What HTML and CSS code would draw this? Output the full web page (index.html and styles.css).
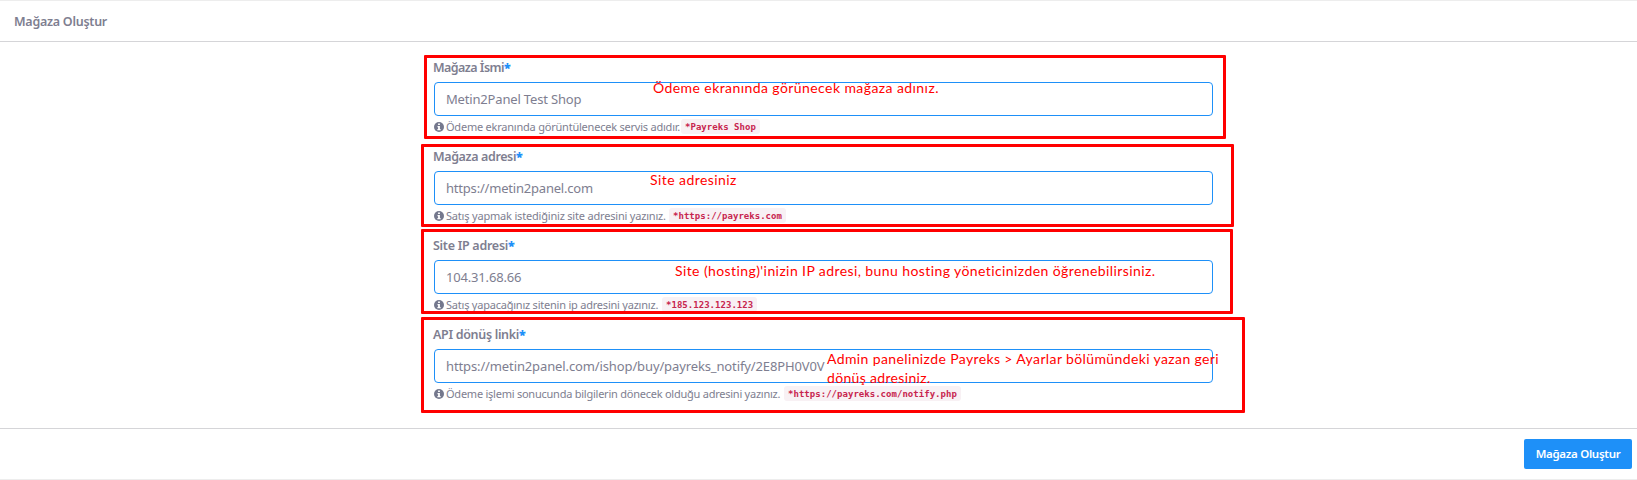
FILE: index.html
```html
<!DOCTYPE html>
<html lang="tr">
<head>
<meta charset="utf-8">
<title>Mağaza Oluştur</title>
<link rel="stylesheet" href="styles.css">
</head>
<body>
<svg width="0" height="0" class="sprite">
  <symbol id="info" viewBox="0 0 10 10">
    <circle cx="5" cy="5" r="5" fill="#74788d"/>
    <path d="M4.1 1.6h1.8v1.5H4.1zM3.5 4.1h2.4v3h.7v1.1H3.4V7.100h.7V5.200h-.6z" fill="#fff"/>
  </symbol>
</svg>
<main class="card">
  <header class="card-header">Mağaza Oluştur</header>
  <form class="card-body">
    <section class="field name">
      <label class="label"><span>Mağaza İsmi</span><b>*</b></label>
      <div class="input">Metin2Panel Test Shop</div>
      <div class="hint"><svg class="icon"><use href="#info"/></svg><span class="help">Ödeme ekranında görüntülenecek servis adıdır.</span><code>*Payreks Shop</code></div>
      <div class="frame"></div>
      <div class="note">Ödeme ekranında görünecek mağaza adınız.</div>
    </section>
    <section class="field address">
      <label class="label"><span>Mağaza adresi</span><b>*</b></label>
      <div class="input">https://metin2panel.com</div>
      <div class="hint"><svg class="icon"><use href="#info"/></svg><span class="help">Satış yapmak istediğiniz site adresini yazınız.</span><code>*https://payreks.com</code></div>
      <div class="frame"></div>
      <div class="note">Site adresiniz</div>
    </section>
    <section class="field ip">
      <label class="label"><span>Site IP adresi</span><b>*</b></label>
      <div class="input">104.31.68.66</div>
      <div class="hint"><svg class="icon"><use href="#info"/></svg><span class="help">Satış yapacağınız sitenin ip adresini yazınız.</span><code>*185.123.123.123</code></div>
      <div class="frame"></div>
      <div class="note">Site (hosting)'inizin IP adresi, bunu hosting yöneticinizden öğrenebilirsiniz.</div>
    </section>
    <section class="field api">
      <label class="label"><span>API dönüş linki</span><b>*</b></label>
      <div class="input">https://metin2panel.com/ishop/buy/payreks_notify/2E8PH0V0V</div>
      <div class="hint"><svg class="icon"><use href="#info"/></svg><span class="help">Ödeme işlemi sonucunda bilgilerin dönecek olduğu adresini yazınız.</span><code>*https://payreks.com/notify.php</code></div>
      <div class="frame"></div>
      <div class="note">Admin panelinizde Payreks &gt; Ayarlar bölümündeki yazan geri<br><span class="last">dönüş adresiniz.</span></div>
    </section>
  </form>
  <footer class="card-footer"><button class="submit" type="button">Mağaza Oluştur</button></footer>
</main>
</body>
</html>
```
FILE: styles.css
```css
* { box-sizing: border-box; }
body {
  margin: 0;
  background: #fff;
  color: #7e7e90;
  font-family: "Noto Sans", sans-serif;
}
.sprite { display: block; position: absolute; }
.card {
  display: flex;
  flex-direction: column;
  height: 480px;
  border-top: 1px solid #ededed;
  border-bottom: 1px solid #ededed;
}
.card-header {
  height: 41px;
  padding-left: 14px;
  border-bottom: 1px solid #d5d5d8;
  font-size: 12.5px;
  font-weight: 600;
  line-height: 41px;
  letter-spacing: -.26px;
}
.card-body {
  flex: 1;
  width: 779px;
  margin-left: 434px;
  padding-top: 17px;
}
.field { position: relative; height: 89px; }
.label {
  display: flex;
  height: 23px;
  margin-left: -1px;
  font-size: 12.5px;
  font-weight: 600;
  line-height: 17px;
  white-space: nowrap;
}
.label b { color: #1e90f8; }
.input {
  height: 34px;
  padding-left: 11px;
  border: 1px solid #1e90f8;
  border-radius: 4px;
  font-size: 13px;
  line-height: 33px;
  white-space: nowrap;
}
.hint {
  display: flex;
  align-items: center;
  height: 15px;
  margin-top: 3px;
  font-size: 11px;
  line-height: 15px;
  white-space: nowrap;
}
.icon { flex: none; width: 10px; height: 10px; margin-right: 2px; }
code {
  height: 15px;
  margin-left: 1px;
  padding: 0 4px;
  border-radius: 3px;
  background: #f8f1f4;
  color: #c7254e;
  font: bold 9px/16px "DejaVu Sans Mono", monospace;
  letter-spacing: .03px;
}
.frame { position: absolute; border: 3px solid #f00; border-radius: 1px; }
.note {
  position: absolute;
  color: #f00;
  font: 14px/19px Lato, sans-serif;
  white-space: nowrap;
}

.name .label { letter-spacing: -.55px; }
.name .input { letter-spacing: -.17px; }
.name .help { width: 234px; letter-spacing: -.22px; }
.name .frame { left: -10px; top: -4px; width: 802px; height: 84px; }
.name .note { left: 219px; top: 19px; letter-spacing: .42px; }

.address .label { letter-spacing: -.38px; }
.address .input { letter-spacing: -.2px; }
.address .help { width: 222px; letter-spacing: -.19px; }
.address .frame { left: -13px; top: -4px; width: 813px; height: 83px; }
.address .note { left: 216px; top: 22px; letter-spacing: .43px; }

.ip .label { letter-spacing: -.28px; }
.ip .input { letter-spacing: -.18px; }
.ip .help { width: 215px; letter-spacing: -.22px; }
.ip .frame { left: -13px; top: -8px; width: 812px; height: 85px; }
.ip .note { left: 241px; top: 24px; letter-spacing: .41px; }

.api .label { letter-spacing: -.32px; }
.api .input { letter-spacing: -.12px; }
.api .help { width: 337px; letter-spacing: -.24px; }
.api .frame { left: -13px; top: -9px; width: 824px; height: 96px; }
.api .note { left: 393px; top: 23px; letter-spacing: .38px; }
.api .last { letter-spacing: .33px; }

.card-footer {
  display: flex;
  justify-content: flex-end;
  height: 51px;
  padding: 10px 5px 0 0;
  border-top: 1px solid #d5d5d8;
}
.submit {
  width: 108px;
  height: 30px;
  padding: 0;
  border: 0;
  border-radius: 2px;
  background: #1e90f8;
  color: #fff;
  font: 600 11.5px/30px "Noto Sans", sans-serif;
  letter-spacing: -.3px;
}
```
